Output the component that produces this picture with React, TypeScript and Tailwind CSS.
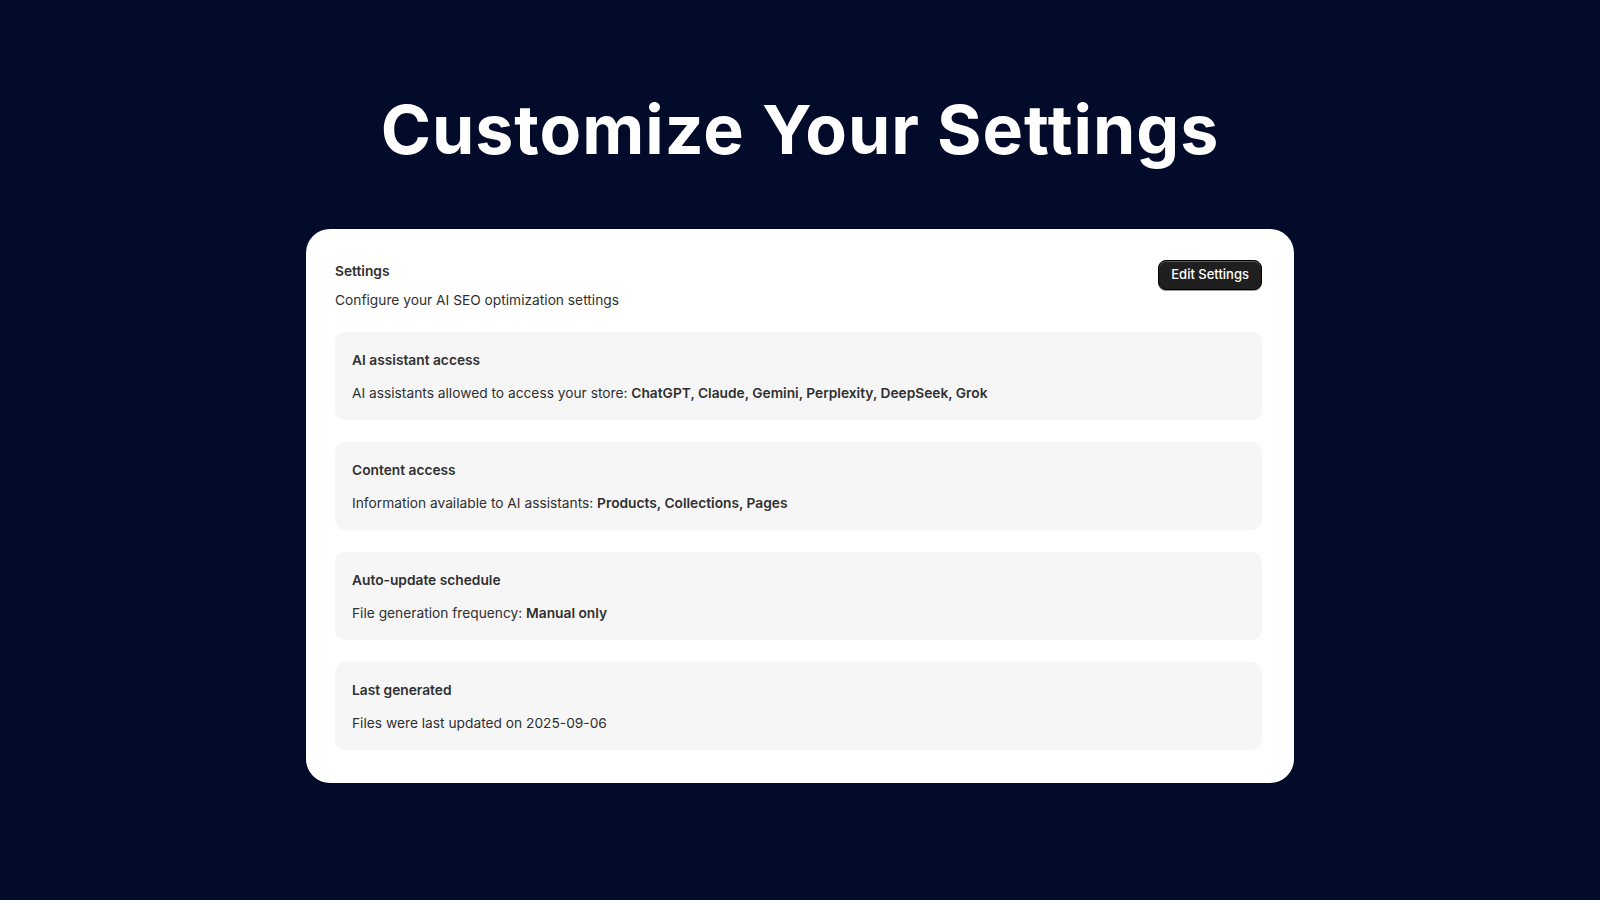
import React from "react";

const sections: { title: string; body: React.ReactNode }[] = [
  {
    title: "AI assistant access",
    body: (
      <>
        AI assistants allowed to access your store:{" "}
        <span className="font-semibold">ChatGPT, Claude, Gemini, Perplexity, DeepSeek, Grok</span>
      </>
    ),
  },
  {
    title: "Content access",
    body: (
      <>
        Information available to AI assistants:{" "}
        <span className="font-semibold">Products, Collections, Pages</span>
      </>
    ),
  },
  {
    title: "Auto-update schedule",
    body: (
      <>
        File generation frequency: <span className="font-semibold">Manual only</span>
      </>
    ),
  },
  {
    title: "Last generated",
    body: <>Files were last updated on 2025-09-06</>,
  },
];

export default function App() {
  return (
    <div
      className="w-[1600px] h-[900px] bg-[#030b2b] flex flex-col items-center overflow-hidden"
      style={{ fontFamily: "Inter, 'Noto Sans', sans-serif" }}
    >
      <h1 className="mt-[86px] h-[86px] leading-[86px] text-white text-[68px] font-bold tracking-[1px]">
        Customize Your Settings
      </h1>
      <div className="mt-[57px] w-[988px] bg-white rounded-[24px] pl-[29px] pr-[32px] pt-[32px] pb-[33px]">
        <div className="flex justify-between items-start">
          <div>
            <div className="text-[13.75px] leading-[20px] font-semibold text-[#303030]">Settings</div>
            <div className="text-[13.75px] leading-[20px] text-[#303030] mt-[9px]">
              Configure your AI SEO optimization settings
            </div>
          </div>
          <button className="-mt-[1px] h-[30px] px-[12px] rounded-[8px] bg-[#1f1f1f] border border-[#000] text-white text-[13px] font-medium shadow-[inset_0_1px_0_rgba(255,255,255,0.25),0_1px_0_rgba(0,0,0,0.4)]">
            Edit Settings
          </button>
        </div>
        <div className="mt-[22px] flex flex-col gap-[22px]">
          {sections.map((s) => (
            <div key={s.title} className="bg-[#f6f6f6] rounded-[10px] h-[88px] px-[17px] pt-[18px]">
              <div className="text-[13.75px] leading-[20px] font-semibold text-[#303030]">{s.title}</div>
              <div className="text-[13.75px] leading-[20px] text-[#303030] mt-[13px]">{s.body}</div>
            </div>
          ))}
        </div>
      </div>
    </div>
  );
}
